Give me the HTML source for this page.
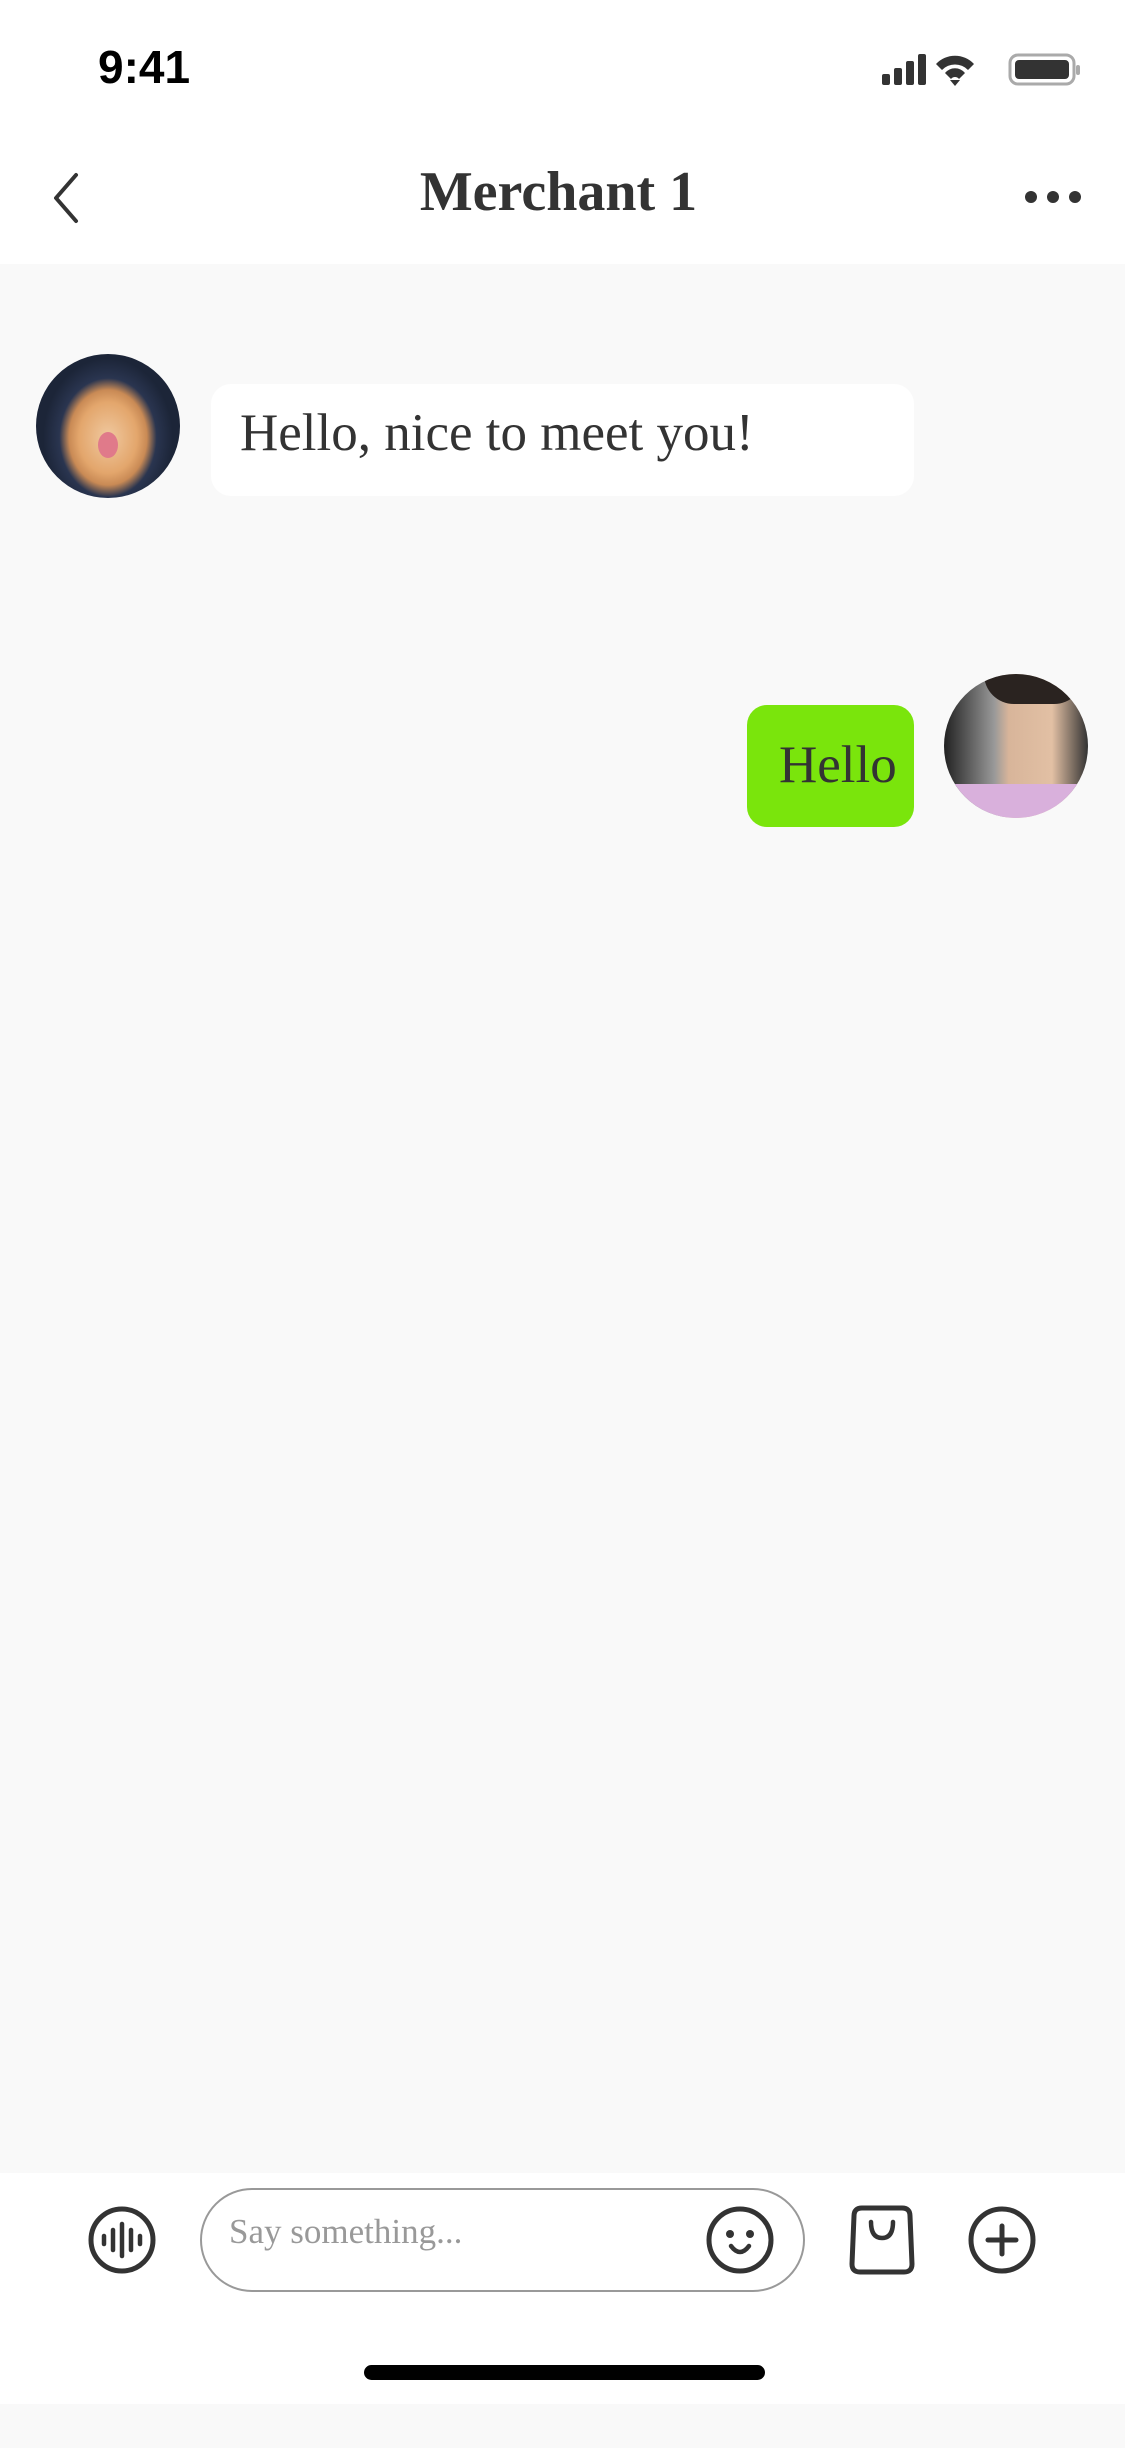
<!DOCTYPE html>
<html><head><meta charset="utf-8"><style>
*{margin:0;padding:0;box-sizing:border-box}
html,body{width:1125px;height:2448px;background:#f9f9f9;overflow:hidden;position:relative;font-family:"Liberation Serif",serif;color:#333}
.abs{position:absolute}
</style></head><body>
<div class="abs" style="left:0;top:0;width:1125px;height:264px;background:#fff"></div>
<div class="abs" style="left:98px;top:40px;font:bold 46px 'Liberation Sans',sans-serif;color:#000">9:41</div>
<svg class="abs" style="left:880px;top:50px" width="200" height="40" viewBox="0 0 200 40">
<rect x="2" y="24" width="8" height="11" rx="2" fill="#333"/><rect x="14" y="18" width="8" height="17" rx="2" fill="#333"/><rect x="26" y="11" width="8" height="24" rx="2" fill="#333"/><rect x="38" y="4" width="8" height="31" rx="2" fill="#333"/>
<path d="M56 14 A26 26 0 0 1 94 14 L88 20 A18 18 0 0 0 62 20Z" fill="#333"/><path d="M65 23 A13 13 0 0 1 85 23 L79 29 A5 5 0 0 0 71 29Z" fill="#333"/><path d="M70 30 L75 36 L80 30Z" fill="#333"/>
<rect x="130" y="5" width="64" height="29" rx="8" fill="none" stroke="#aaa" stroke-width="3"/><rect x="135" y="10" width="54" height="19" rx="4" fill="#333"/><rect x="196" y="15" width="4" height="10" rx="2" fill="#aaa"/>
</svg>
<svg class="abs" style="left:46px;top:170px" width="40" height="56"><path d="M30 5 L10 28 L30 51" fill="none" stroke="#333" stroke-width="4" stroke-linecap="round" stroke-linejoin="round"/></svg>
<div class="abs" style="left:-4px;width:1125px;top:160px;text-align:center;font-size:56px;font-weight:bold;color:#333">Merchant 1</div>
<svg class="abs" style="left:1022px;top:186px" width="64" height="22"><circle cx="9" cy="11" r="6" fill="#333"/><circle cx="31" cy="11" r="6" fill="#333"/><circle cx="53" cy="11" r="6" fill="#333"/></svg>

<div class="abs" style="left:36px;top:354px;width:144px;height:144px;border-radius:50%;background:radial-gradient(ellipse 45% 55% at 50% 58%,#f0c9a0 0%,#e3a66c 45%,#c98a55 60%,#2a3550 75%,#1c2538 100%);overflow:hidden"><div class="abs" style="left:62px;top:78px;width:20px;height:26px;border-radius:50%;background:#e07a8a"></div></div>
<div class="abs" style="left:211px;top:384px;width:703px;height:112px;background:#fff;border-radius:20px"></div>
<div class="abs" style="left:240px;top:403px;font-size:53px;color:#333;white-space:nowrap">Hello, nice to meet you!</div>

<div class="abs" style="left:747px;top:705px;width:167px;height:122px;background:#7ae50c;border-radius:20px"></div>
<div class="abs" style="left:779px;top:735px;font-size:53px;color:#333">Hello</div>
<div class="abs" style="left:944px;top:674px;width:144px;height:144px;border-radius:50%;overflow:hidden;background:linear-gradient(90deg,#222 0%,#777 25%,#999 35%,#d8b59a 45%,#e2c0a4 75%,#333 100%)"><div class="abs" style="left:0;top:110px;width:144px;height:40px;background:#d9b0dc"></div><div class="abs" style="left:40px;top:0;width:100px;height:30px;background:#2a2320;border-radius:0 0 40px 40px"></div></div>

<div class="abs" style="left:0;top:2173px;width:1125px;height:231px;background:#fff"></div>
<svg class="abs" style="left:86px;top:2204px" width="72" height="72" viewBox="0 0 72 72"><circle cx="36" cy="36" r="31" fill="none" stroke="#333" stroke-width="5"/><g stroke="#333" stroke-width="4.5" stroke-linecap="round"><line x1="18" y1="32" x2="18" y2="40"/><line x1="27" y1="26" x2="27" y2="46"/><line x1="36" y1="20" x2="36" y2="52"/><line x1="45" y1="26" x2="45" y2="46"/><line x1="54" y1="32" x2="54" y2="40"/></g></svg>
<div class="abs" style="left:200px;top:2188px;width:605px;height:104px;border:2.5px solid #999;border-radius:52px"></div>
<div class="abs" style="left:229px;top:2212px;font-size:35px;color:#999">Say something...</div>
<svg class="abs" style="left:704px;top:2204px" width="72" height="72" viewBox="0 0 72 72"><circle cx="36" cy="36" r="31" fill="none" stroke="#333" stroke-width="5"/><circle cx="26" cy="30" r="4" fill="#333"/><circle cx="46" cy="30" r="4" fill="#333"/><path d="M27 42 Q36 54 45 42" fill="none" stroke="#333" stroke-width="4.5" stroke-linecap="round"/></svg>
<svg class="abs" style="left:848px;top:2204px" width="68" height="72" viewBox="0 0 68 72"><path d="M14 4 H54 Q62 4 62 12 L64 60 Q64 68 56 68 H12 Q4 68 4 60 L6 12 Q6 4 14 4Z" fill="none" stroke="#333" stroke-width="5"/><path d="M23 18 Q23 34 34 34 Q45 34 45 18" fill="none" stroke="#333" stroke-width="4.5" stroke-linecap="round"/></svg>
<svg class="abs" style="left:966px;top:2204px" width="72" height="72" viewBox="0 0 72 72"><circle cx="36" cy="36" r="31" fill="none" stroke="#333" stroke-width="5"/><path d="M36 22 V50 M22 36 H50" stroke="#333" stroke-width="5" stroke-linecap="round"/></svg>
<div class="abs" style="left:364px;top:2365px;width:401px;height:15px;background:#000;border-radius:8px"></div>
</body></html>
